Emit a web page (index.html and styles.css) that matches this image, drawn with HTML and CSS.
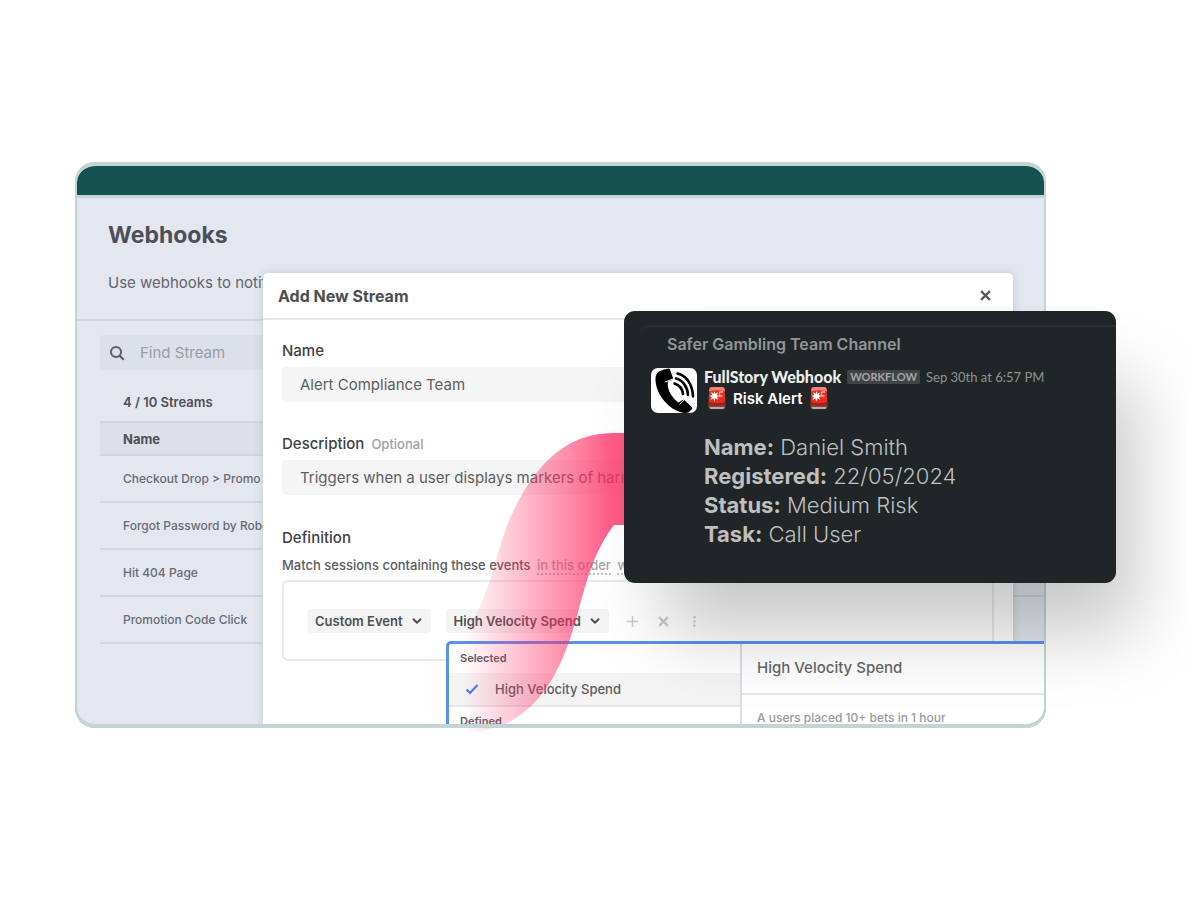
FILE: index.html
```html
<!DOCTYPE html>
<html lang="en">
<head>
<meta charset="utf-8">
<meta name="viewport" content="width=device-width, initial-scale=1">
<title>Webhooks</title>
<link rel="stylesheet" href="styles.css">
</head>
<body>
<svg class="defs" aria-hidden="true">
  <symbol id="chevron" viewBox="0 0 10 10"><path d="M1.5 3.2 5 6.7 8.5 3.2" fill="none" stroke="currentColor" stroke-width="2" stroke-linecap="round" stroke-linejoin="round"/></symbol>
  <symbol id="cross" viewBox="0 0 10 10"><path d="M1 1 9 9M9 1 1 9" fill="none" stroke="currentColor" stroke-width="2"/></symbol>
  <symbol id="siren" viewBox="0 0 20 24">
    <path d="M2 18.5h16l.8 2.5-1.8 2.2H3L1.200 21z" fill="#6d4a4a"/>
    <path d="M2.500 21h15l-1 2H3.500z" fill="#b9aaa9"/>
    <path d="M2.200 4Q2.400 1.200 5 1h10q2.600.2 2.800 3l.6 14.500Q10 21 1.600 18.500z" fill="#e2301f"/>
    <path d="M2.200 4Q2.400 1.200 5 1h10q2.600.2 2.800 3l.1 1.500Q10 2.800 2.100 5.500z" fill="#f0837a"/>
    <path d="M1.700 16Q10 18.500 18.300 16l.1 2.500Q10 21 1.600 18.500z" fill="#a81a12"/>
    <path d="m7.500 5 .9 3L11 6l-1.200 3.200 3 .8-2.900 1 1.400 3-2.900-1.700-1.100 3.200-.9-3.200L3.500 14l1.400-3-2.400-1 2.600-1L4 6l2.600 1.800z" fill="#fff"/>
    <path d="M12.500 6h3.500M12.500 6v4h3" stroke="#ffb1a8" stroke-width="1.300" fill="none"/>
  </symbol>
</svg>
<main class="scene">
  <section class="window">
    <div class="window-bar"></div>
    <header class="page-head">
      <h1>Webhooks</h1>
      <p>Use webhooks to notify</p>
    </header>
    <div class="streams">
      <label class="search">
        <svg viewBox="0 0 16 16" aria-hidden="true"><circle cx="7" cy="7" r="5" fill="none" stroke="currentColor" stroke-width="2"/><path d="m10.700 10.700 4 4" stroke="currentColor" stroke-width="2.200"/></svg>
        <input type="search" placeholder="Find Stream" aria-label="Find Stream">
      </label>
      <p class="count">4 / 10 Streams</p>
      <table class="stream-table">
        <thead><tr><th scope="col">Name</th></tr></thead>
        <tbody>
          <tr><td>Checkout Drop &gt; Promo Error</td></tr>
          <tr><td>Forgot Password by Robots</td></tr>
          <tr><td>Hit 404 Page</td></tr>
          <tr><td>Promotion Code Click</td></tr>
        </tbody>
      </table>
    </div>

    <form class="modal">
      <header class="modal-head">
        <h2>Add New Stream</h2>
        <button type="button" class="icon-btn close" aria-label="Close"><svg aria-hidden="true"><use href="#cross"/></svg></button>
      </header>
      <div class="modal-body">
        <div class="field">
          <label for="stream-name">Name</label>
          <input id="stream-name" type="text" value="Alert Compliance Team">
        </div>
        <div class="field">
          <label for="stream-desc">Description <small>Optional</small></label>
          <input id="stream-desc" type="text" value="Triggers when a user displays markers of harm">
        </div>
        <h3>Definition</h3>
        <p class="match">Match sessions containing these events <a href="#order">in this order</a> <a href="#within">within</a></p>
        <div class="rule">
          <button type="button" class="chip">Custom Event <svg aria-hidden="true"><use href="#chevron"/></svg></button>
          <button type="button" class="chip">High Velocity Spend <svg aria-hidden="true"><use href="#chevron"/></svg></button>
          <div class="rule-tools">
            <button type="button" class="icon-btn" aria-label="Add"><svg viewBox="0 0 12 12" aria-hidden="true"><path d="M6 0v12M0 6h12" stroke="currentColor" stroke-width="1.600"/></svg></button>
            <button type="button" class="icon-btn" aria-label="Remove"><svg aria-hidden="true"><use href="#cross"/></svg></button>
            <button type="button" class="icon-btn" aria-label="More"><svg viewBox="0 0 12 12" fill="currentColor" aria-hidden="true"><circle cx="6" cy="1.300" r="1.300"/><circle cx="6" cy="6" r="1.300"/><circle cx="6" cy="10.700" r="1.300"/></svg></button>
          </div>
        </div>
      </div>
    </form>

    <div class="menu">
      <div class="menu-list">
        <p class="menu-group">Selected</p>
        <button type="button" class="menu-item"><svg viewBox="0 0 14 12" aria-hidden="true"><path d="m1.500 6.500 3.500 3.500L12.500 2" fill="none" stroke="currentColor" stroke-width="2.200"/></svg>High Velocity Spend</button>
        <p class="menu-group">Defined</p>
      </div>
      <div class="menu-detail">
        <h4>High Velocity Spend</h4>
        <p>A users placed 10+ bets in 1 hour</p>
      </div>
    </div>
  </section>

  <svg class="swoosh" viewBox="0 0 165 300" aria-hidden="true">
    <defs><linearGradient id="pink"><stop offset="0" stop-color="#ff2f66" stop-opacity="0"/><stop offset=".92" stop-color="#ff2f66" stop-opacity=".78"/><stop offset="1" stop-color="#ff2f66" stop-opacity=".8"/></linearGradient></defs>
    <path d="M165 0H155C102 0 73 38 52 83C36 118 33 163 3 205V299C72 300 102 245 119 179C128 147 135 118 155 92H165Z" fill="url(#pink)"/>
  </svg>

  <section class="alert">
    <div class="alert-panel">
      <h2 class="channel">Safer Gambling Team Channel</h2>
      <div class="message">
        <svg class="avatar" viewBox="0 0 46 45" aria-hidden="true">
          <rect width="46" height="45" rx="7" fill="#fff"/>
          <path d="M13 1.500 17.500.5Q18.500.5 19 1.500L22 10q.2 1.500-1 2l-4 1.500C15.500 20 20 29 27.500 34.500l4-2.500q1.200-.6 2.200.3l7 6.700q1 1.200 0 2.200L37.500 44.500Q34 45.500 29 44C15 39 4 24 4.500 10Q5 4.500 9 3z" fill="#000"/>
          <path d="m14 14 8-3M28.500 36.500l5-5" stroke="#fff" stroke-width="1"/>
          <path d="M23.500 15.500c4.500 1.500 8 5.500 8.500 10.500M25 10.500c6.500 1.500 11.500 8 12 16.500M26.500 5.500c9 2 15 11 15.500 23" fill="none" stroke="#000" stroke-width="2.600" stroke-linecap="round"/>
        </svg>
        <div class="message-body">
          <p class="sender"><strong>FullStory Webhook</strong><span class="tag">WORKFLOW</span><time>Sep 30th at 6:57 PM</time></p>
          <p class="headline"><svg aria-hidden="true"><use href="#siren"/></svg>Risk Alert<svg aria-hidden="true"><use href="#siren"/></svg></p>
          <dl class="facts">
            <div><dt>Name:</dt> <dd>Daniel Smith</dd></div>
            <div><dt>Registered:</dt> <dd>22/05/2024</dd></div>
            <div><dt>Status:</dt> <dd>Medium Risk</dd></div>
            <div><dt>Task:</dt> <dd>Call User</dd></div>
          </dl>
        </div>
      </div>
    </div>
  </section>
</main>
</body>
</html>
```
FILE: styles.css
```css
* { box-sizing: border-box; }
body {
  margin: 0;
  padding: 162px 141px 40px 75px;
  background: #fff;
  color: #4d4f55;
  font-family: Inter, "Open Sans", sans-serif;
  overflow-x: hidden;
}
h1, h2, h3, h4, p, dl, dd { margin: 0; }
button, input { font: inherit; color: inherit; border: 0; background: none; padding: 0; min-width: 0; }
.defs { position: absolute; width: 0; height: 0; }

.scene { position: relative; }
.window {
  position: relative;
  overflow: hidden;
  padding-bottom: 80px;
  background: #e4e7f0;
  border: solid #c3d4d4;
  border-width: 4px 2px;
  border-radius: 20px;
}
/* Frame edge stays above the swoosh. */
.scene::after {
  content: "";
  position: absolute;
  inset: 0;
  z-index: 1;
  border: solid #c3d4d4;
  border-width: 4px 2px;
  border-radius: 20px;
  pointer-events: none;
}
.window-bar { height: 32px; background: #145150; border-bottom: 3px solid #c3d4d4; }

.page-head { padding: 21px 31px 24px; border-bottom: 2px solid #d2d6e3; }
.page-head h1 { font-size: 23px; line-height: 32px; font-weight: 700; color: #4c4f58; }
.page-head p { margin-top: 20px; font-size: 15px; line-height: 24px; color: #62656e; }

.streams { padding: 14px 0 0 23px; }
.search { display: flex; align-items: center; gap: 15px; height: 35px; padding: 0 9px; background: #dce0e9; border-radius: 4px; color: #5a5d65; }
.search svg { width: 16px; height: 16px; }
.search input { flex: 1; outline: 0; font-size: 15px; }
.search input::placeholder { color: #999ca6; opacity: 1; }
.count { margin: 22px 0 9px 23px; font-size: 13px; line-height: 20px; font-weight: 600; }
.stream-table { width: 100%; border-collapse: separate; border-spacing: 0; text-align: left; font-size: 13px; }
.stream-table th, .stream-table td { padding: 0 23px; border-bottom: 2px solid #d2d6e3; }
.stream-table th { height: 35px; background: #dce0e9; border-top: 2px solid #d2d6e3; font-weight: 700; }
.stream-table td { height: 47px; color: #686b74; font-weight: 500; font-size: 12px; }

.modal {
  position: absolute;
  inset: 107px 31px 0 186px;
  background: #fff;
  border-radius: 5px 5px 0 0;
  box-shadow: 0 0 9px rgba(80, 85, 110, .22);
}
.modal-head { display: flex; align-items: center; justify-content: space-between; height: 47px; padding: 0 22px 0 15px; border-bottom: 2px solid #e9eaf0; }
.modal-head h2 { font-size: 16px; line-height: 24px; font-weight: 700; color: #4c4d50; }
.icon-btn { display: grid; place-items: center; width: 12px; height: 12px; color: #c9cacc; }
.icon-btn svg { width: 11px; height: 11px; }
.close { color: #55575c; }
.modal-body { padding: 20px 19px 0; }
.field { margin-bottom: 31px; }
.field label { display: block; font-size: 15px; line-height: 22px; font-weight: 500; color: #3e4044; }
.field small { margin-left: 3px; font-size: 13px; color: #a0a1a4; }
.field input { display: block; width: 100%; height: 35px; margin-top: 5px; padding: 0 18px; border-radius: 4px; background: #f5f5f5; font-size: 15px; color: #5d5e61; }
.modal h3 { font-size: 15px; line-height: 24px; font-weight: 500; color: #3e4044; }
.match { margin-top: 5px; font-size: 13px; line-height: 20px; font-weight: 500; color: #5b5c60; white-space: nowrap; overflow: hidden; }
.match a { margin-left: 3px; color: #a6a6a9; text-decoration: none; border-bottom: 2px dotted #c2c2c5; }
.rule { display: flex; align-items: flex-start; gap: 15px; height: 81px; margin-top: 5px; padding: 27px 23px 0; border: 2px solid #e9eaf0; border-radius: 6px; }
.chip { display: flex; align-items: center; gap: 9px; height: 24px; padding: 0 9px 0 8px; border-radius: 4px; background: #f4f4f5; font-size: 13px; font-weight: 600; color: #4f5054; white-space: nowrap; }
.chip svg { width: 10px; height: 10px; }
.rule-tools { display: flex; align-items: center; gap: 19px; height: 24px; margin-left: 3px; }

.menu {
  position: absolute;
  inset: 475px -3px -6px 369px;
  display: grid;
  grid-template-columns: 291px 1fr;
  overflow: hidden;
  background: #fff;
  border: 3px solid #5c90ea;
  border-radius: 5px 0 0 0;
}
.menu-list { color: #5b5c60; }
.menu-group { padding: 4px 11px 5px; font-size: 11px; line-height: 20px; font-weight: 600; }
.menu-item { display: flex; align-items: center; gap: 16px; width: 100%; height: 34px; padding: 0 16px; background: #f4f4f5; border-bottom: 2px solid #e6e6ed; font-size: 13px; font-weight: 500; }
.menu-item svg { width: 14px; height: 12px; color: #4a7cf0; }
.menu-detail { border-left: 2px solid #dddce8; }
.menu-detail h4 { padding: 12px 15px 13px; border-bottom: 2px solid #e6e6ed; font-size: 15px; line-height: 24px; font-weight: 500; color: #66676a; }
.menu-detail p { padding: 13px 15px; font-size: 12px; line-height: 20px; font-weight: 500; color: #98999c; white-space: nowrap; }

.alert {
  position: absolute;
  z-index: 2;
  inset: 149px -70px auto 549px;
  padding: 14px 0 0 17px;
  background: #202628;
  border-radius: 11px;
  box-shadow: 30px 60px 75px -10px rgba(0, 0, 0, .22);
}
.alert-panel { padding: 5px 10px 34px; border-top: 2px solid #2a3036; border-radius: 8px 0 0 0; }
.channel { padding-left: 16px; font-size: 16px; line-height: 24px; font-weight: 600; color: #949597; }
.message { display: flex; align-items: flex-start; gap: 7px; margin-top: 10px; }
.avatar { flex: none; width: 46px; height: 45px; margin-top: 2px; }
.sender { display: flex; align-items: center; gap: 6px; font-family: Lato, sans-serif; line-height: 22px; white-space: nowrap; }
.sender strong { font-size: 16px; font-weight: 900; color: #ededed; }
.tag { padding: 0 3px; border-radius: 2px; background: #414447; font-size: 11px; line-height: 14px; font-weight: 700; color: #a5a6a8; }
.sender time { font-size: 13px; color: #919294; }
.headline { display: flex; align-items: center; gap: 6px; height: 20px; padding-left: 3px; font-size: 15px; font-weight: 600; color: #fff; }
.headline svg { width: 20px; height: 24px; }
.facts { margin-top: 25px; font-size: 22px; line-height: 29px; color: #bfbfbf; }
.facts dt, .facts dd { display: inline; }
.facts dt { font-weight: 700; }
.facts dd { font-weight: 300; }

.swoosh { position: absolute; top: 271px; left: 384px; width: 165px; height: 300px; pointer-events: none; }
```
